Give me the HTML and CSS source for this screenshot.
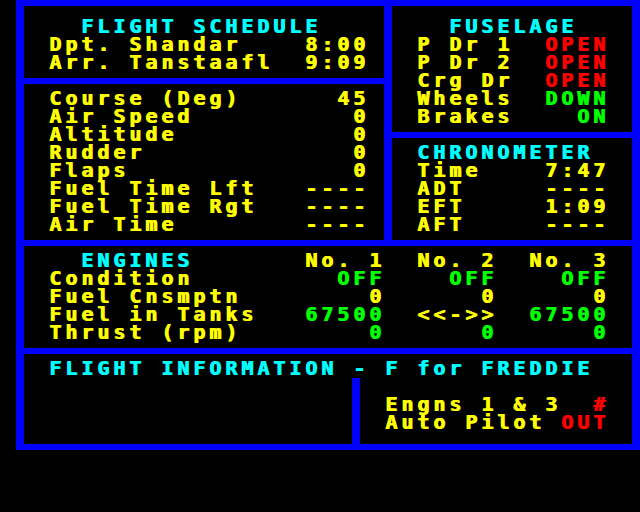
FILE: index.html
```html
<!DOCTYPE html>
<html lang="en">
<head>
<meta charset="utf-8">
<title>Flight Deck - F for Freddie</title>
<link rel="stylesheet" href="styles.css">
</head>
<body>
<main class="screen">
  <div class="top">
    <div class="col">
      <section class="panel schedule">
        <h2 class="title cyan indent">FLIGHT SCHEDULE</h2>
        <div class="row"><span>Dpt. Shandar</span><span>8:00</span></div>
        <div class="row"><span>Arr. Tanstaafl</span><span>9:09</span></div>
      </section>
      <section class="panel flight">
        <div class="row"><span>Course (Deg)</span><span>45</span></div>
        <div class="row"><span>Air Speed</span><span>0</span></div>
        <div class="row"><span>Altitude</span><span>0</span></div>
        <div class="row"><span>Rudder</span><span>0</span></div>
        <div class="row"><span>Flaps</span><span>0</span></div>
        <div class="row"><span>Fuel Time Lft</span><span>----</span></div>
        <div class="row"><span>Fuel Time Rgt</span><span>----</span></div>
        <div class="row"><span>Air Time</span><span>----</span></div>
      </section>
    </div>
    <div class="col">
      <section class="panel fuselage">
        <h2 class="title cyan indent">FUSELAGE</h2>
        <div class="row"><span>P Dr 1</span><span class="red">OPEN</span></div>
        <div class="row"><span>P Dr 2</span><span class="red">OPEN</span></div>
        <div class="row"><span>Crg Dr</span><span class="red">OPEN</span></div>
        <div class="row"><span>Wheels</span><span class="green">DOWN</span></div>
        <div class="row"><span>Brakes</span><span class="green">ON</span></div>
      </section>
      <section class="panel chrono">
        <h2 class="title cyan">CHRONOMETER</h2>
        <div class="row"><span>Time</span><span>7:47</span></div>
        <div class="row"><span>ADT</span><span>----</span></div>
        <div class="row"><span>EFT</span><span>1:09</span></div>
        <div class="row"><span>AFT</span><span>----</span></div>
      </section>
    </div>
  </div>

  <section class="panel engines">
    <div class="eng-grid">
      <h2 class="title cyan indent">ENGINES</h2><span class="num">No. 1</span><span class="num">No. 2</span><span class="num">No. 3</span>
      <span>Condition</span><span class="num green">OFF</span><span class="num green">OFF</span><span class="num green">OFF</span>
      <span>Fuel Cnsmptn</span><span class="num">0</span><span class="num">0</span><span class="num">0</span>
      <span>Fuel in Tanks</span><span class="num green">67500</span><span class="num">&lt;&lt;-&gt;&gt;</span><span class="num green">67500</span>
      <span>Thrust (rpm)</span><span class="num green">0</span><span class="num green">0</span><span class="num green">0</span>
    </div>
  </section>

  <section class="panel info">
    <h2 class="title cyan info-title">FLIGHT INFORMATION - F for FREDDIE</h2>
    <div class="split">
      <div class="pane"></div>
      <div class="pane status">
        <div class="row"><span>Engns 1 &amp; 3</span><span class="red">#</span></div>
        <div class="row"><span>Auto Pilot</span><span class="red">OUT</span></div>
      </div>
    </div>
  </section>
</main>
</body>
</html>
```

FILE: styles.css
```css
* {
  box-sizing: border-box;
  margin: 0;
  padding: 0;
}

html,
body {
  background: #000;
}

body {
  width: 640px;
  height: 512px;
  overflow: hidden;
  color: #ffff00;
  font-family: "DejaVu Sans Mono", "Liberation Mono", monospace;
  font-weight: bold;
  font-size: 20px;
  letter-spacing: 3.96px;
  line-height: 18px;
  white-space: nowrap;
  text-shadow: 1px 0 currentColor;
}

h2 {
  font: inherit;
}

.cyan { color: #00ffff; }
.red { color: #ff0000; }
.green { color: #00ff00; }

.screen {
  margin-left: 16px;
  width: 624px;
  padding: 6px 8px;
  background: #0000ff;
  display: flex;
  flex-direction: column;
  gap: 6px;
}

.top {
  display: grid;
  grid-template-columns: 360px 240px;
  column-gap: 8px;
}

.col {
  display: flex;
  flex-direction: column;
  gap: 6px;
}

.panel {
  background: #000;
}

.title {
  height: 18px;
}

.indent {
  padding-left: 32px;
}

.row {
  display: flex;
  justify-content: space-between;
  height: 18px;
}

.schedule {
  height: 72px;
  padding: 11px 15px 0 25px;
}

.flight {
  height: 156px;
  padding: 5px 15px 0 25px;
}

.fuselage {
  height: 126px;
  padding: 11px 23px 0 25px;
}

.chrono {
  height: 102px;
  padding: 5px 23px 0 25px;
}

.engines {
  height: 102px;
  padding: 5px 23px 0 25px;
}

.eng-grid {
  display: grid;
  grid-template-columns: 1fr repeat(3, 112px);
  grid-auto-rows: 18px;
}

.num {
  text-align: right;
}

.info {
  height: 90px;
  padding-top: 5px;
  display: flex;
  flex-direction: column;
}

.info-title {
  padding-left: 25px;
  margin-bottom: 1px;
}

.split {
  flex: 1;
  display: grid;
  grid-template-columns: 328px 1fr;
  column-gap: 8px;
  background: #0000ff;
}

.pane {
  background: #000;
}

.status {
  padding: 17px 23px 0 25px;
}
```
